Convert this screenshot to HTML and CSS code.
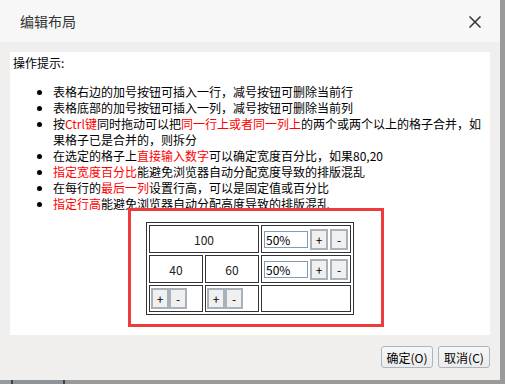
FILE: index.html
```html
<!DOCTYPE html>
<html lang="zh-CN">
<head>
<meta charset="utf-8">
<title>编辑布局</title>
<link rel="stylesheet" href="styles.css">
</head>
<body>
<div class="screen">
  <div class="dialog">
    <div class="titlebar">
      <span class="title">编辑布局</span>
      <svg class="close" width="12" height="12" viewBox="0 0 12 12"><path d="M0.5 0.5 L11.5 11.5 M11.5 0.5 L0.5 11.5" stroke="#333" stroke-width="1.5" fill="none"/></svg>
    </div>
    <div class="body">
      <div class="content">
        <p class="hint">操作提示:</p>
        <ul class="tips">
          <li>表格右边的加号按钮可插入一行，减号按钮可删除当前行</li>
          <li>表格底部的加号按钮可插入一列，减号按钮可删除当前列</li>
          <li>按<span class="red">Ctrl键</span>同时拖动可以把<span class="red">同一行上或者同一列上</span>的两个或两个以上的格子合并，如果格子已是合并的，则拆分</li>
          <li>在选定的格子上<span class="red">直接输入数字</span>可以确定宽度百分比，如果80,20</li>
          <li><span class="red">指定宽度百分比</span>能避免浏览器自动分配宽度导致的排版混乱</li>
          <li>在每行的<span class="red">最后一列</span>设置行高，可以是固定值或百分比</li>
          <li><span class="red">指定行高</span>能避免浏览器自动分配高度导致的排版混乱</li>
        </ul>
        <table class="layout">
          <colgroup><col class="c1"><col class="c2"><col class="c3"></colgroup>
          <tr class="r1">
            <td colspan="2" class="num">100</td>
            <td><div class="ctl"><input class="pct" value="50%"><button class="sm">+</button><button class="sm">-</button></div></td>
          </tr>
          <tr class="r2">
            <td class="num">40</td>
            <td class="num">60</td>
            <td><div class="ctl"><input class="pct" value="50%"><button class="sm">+</button><button class="sm">-</button></div></td>
          </tr>
          <tr class="r3">
            <td><div class="ctl tight"><button class="sm">+</button><button class="sm">-</button></div></td>
            <td><div class="ctl tight"><button class="sm">+</button><button class="sm">-</button></div></td>
            <td></td>
          </tr>
        </table>
        <div class="mark"></div>
      </div>
    </div>
    <div class="footer">
      <button class="btn">确定(O)</button>
      <button class="btn">取消(C)</button>
    </div>
  </div>
  <div class="strip"><div class="behind"></div></div>
</div>
</body>
</html>
```

FILE: styles.css
```css
html, body {
  margin: 0;
  padding: 0;
  background: #9a9a9a;
}
body {
  font-family: "Noto Sans CJK SC", "Microsoft YaHei", sans-serif;
  font-size: 12px;
  color: #000;
}
.screen {
  width: 505px;
  height: 384px;
  background: #9a9a9a;
  overflow: hidden;
}
.dialog {
  width: 500px;
  height: 380px;
  background: #f0efee;
  display: flex;
  flex-direction: column;
}
.titlebar {
  height: 42px;
  flex: none;
  background: #f7f7f7;
  display: flex;
  align-items: center;
  justify-content: space-between;
  padding: 0 19px 0 20px;
}
.title {
  font-size: 14px;
  color: #333;
  line-height: 18px;
}
.close {
  display: block;
  margin-top: 2px;
}
.body {
  padding: 10px 10px 0;
}
.content {
  position: relative;
  background: #fff;
  height: 283px;
  box-sizing: border-box;
  padding: 3px 3px 0;
  line-height: 16px;
}
.hint {
  margin: 0;
}
.tips {
  margin: 13px 0 10px;
  padding-left: 40px;
}
.red {
  color: #ff0000;
  display: inline-block;
  line-height: 16px;
}
.layout {
  margin: 0 auto;
  width: 208px;
  table-layout: fixed;
  border: 1px solid #333;
  border-spacing: 2px;
  line-height: normal;
}
.c1, .c2 { width: 54px; }
.c3 { width: 90px; }
.layout td {
  border: 1px solid #333;
  padding: 0;
  vertical-align: middle;
}
.r1, .r2 { height: 28px; }
.r3 { height: 27px; }
.num {
  text-align: center;
  color: #222;
}
.ctl {
  display: flex;
  align-items: center;
  gap: 2px;
  padding-left: 2px;
}
.ctl.tight {
  gap: 0;
  padding-left: 1px;
}
.pct {
  box-sizing: border-box;
  width: 44px;
  height: 17px;
  border: 1px solid #7f9db9;
  padding: 0 1px;
  margin: 0;
  font: 12px "Noto Sans CJK SC", sans-serif;
  color: #000;
  outline: none;
}
.sm {
  box-sizing: border-box;
  width: 18px;
  height: 21px;
  margin: 0;
  padding: 0;
  border: 2px solid #a9b2bb;
  background: #f0f0f0;
  font: 12px "Noto Sans CJK SC", sans-serif;
  color: #000;
  line-height: 15px;
}
.mark {
  position: absolute;
  left: 118px;
  top: 156px;
  width: 256px;
  height: 119px;
  box-sizing: border-box;
  border: 3px solid #ef3b3b;
}
.footer {
  display: flex;
  justify-content: flex-end;
  gap: 5px;
  padding: 11px 10px 0;
}
.btn {
  box-sizing: border-box;
  width: 52px;
  height: 22px;
  margin: 0;
  padding: 0;
  border: 1px solid #aab6c2;
  border-radius: 3px;
  background: linear-gradient(#f7f7f7, #ebebeb);
  font: 12px "Noto Sans CJK SC", sans-serif;
  color: #000;
}
.strip {
  height: 4px;
  display: flex;
}
.behind {
  margin-left: 11px;
  width: 54px;
  box-sizing: border-box;
  border-left: 2px solid #3a4554;
  border-right: 2px solid #3a4554;
  background: #8f9398;
}
```
